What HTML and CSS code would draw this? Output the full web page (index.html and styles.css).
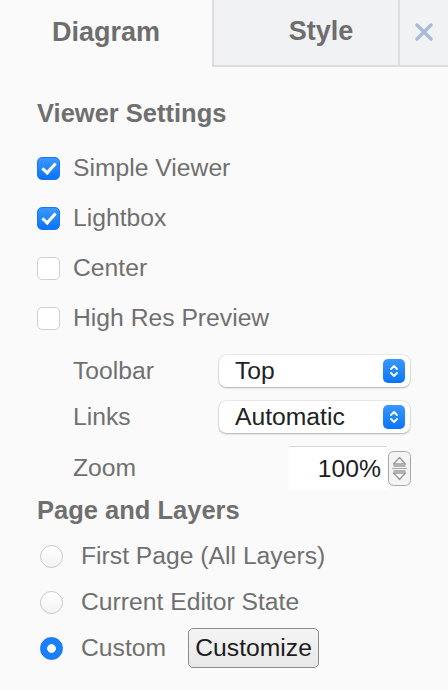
FILE: index.html
```html
<!DOCTYPE html>
<html lang="en">
  <head>
    <meta charset="UTF-8">
    <meta name="viewport" content="width=device-width, initial-scale=1.0">
    <title>Format Panel</title>
    <link rel="stylesheet" href="styles.css">
  </head>
  <body>
    <div class="tabs">
      <div class="tab active">Diagram</div>
      <div class="tab style">Style</div>
      <div class="tab close">
        <svg width="18" height="18" viewBox="0 0 18 18">
          <path d="M2 2 L16 16 M16 2 L2 16" stroke="#a8bcd2" stroke-width="3.4" stroke-linecap="round"/>
        </svg>
      </div>
    </div>

    <div class="panel">
      <div class="section-title">Viewer Settings</div>

      <label class="check-row">
        <span class="box checked"></span>
        <span>Simple Viewer</span>
      </label>
      <label class="check-row">
        <span class="box checked"></span>
        <span>Lightbox</span>
      </label>
      <label class="check-row">
        <span class="box"></span>
        <span>Center</span>
      </label>
      <label class="check-row">
        <span class="box"></span>
        <span>High Res Preview</span>
      </label>

      <div class="option-row first">
        <span class="option-label">Toolbar</span>
        <div class="select">
          <span>Top</span>
          <span class="select-arrows">
            <svg width="12" height="16" viewBox="0 0 12 16">
              <path d="M3 6 L6 3 L9 6 M3 10 L6 13 L9 10" fill="none" stroke="#fff" stroke-width="1.8" stroke-linecap="round" stroke-linejoin="round"/>
            </svg>
          </span>
        </div>
      </div>
      <div class="option-row">
        <span class="option-label">Links</span>
        <div class="select">
          <span>Automatic</span>
          <span class="select-arrows">
            <svg width="12" height="16" viewBox="0 0 12 16">
              <path d="M3 6 L6 3 L9 6 M3 10 L6 13 L9 10" fill="none" stroke="#fff" stroke-width="1.8" stroke-linecap="round" stroke-linejoin="round"/>
            </svg>
          </span>
        </div>
      </div>
      <div class="option-row zoom-row">
        <span class="option-label">Zoom</span>
        <div class="zoom-input">100%</div>
        <div class="spinner">
          <svg width="23" height="35" viewBox="0 0 23 35">
            <rect x="0.5" y="0.5" width="22" height="34" rx="5" fill="#f4f4f4" stroke="#a9a9a9"/>
            <line x1="4" y1="17.5" x2="19" y2="17.5" stroke="#a9a9a9"/>
            <path d="M5.5 13 L11.5 6.5 L17.5 13 Z M5.5 15 L17.5 15" fill="none" stroke="#9a9a9a" stroke-width="1.3" stroke-linejoin="round"/>
            <path d="M5.5 22 L11.5 28.5 L17.5 22 Z M5.5 20 L17.5 20" fill="none" stroke="#9a9a9a" stroke-width="1.3" stroke-linejoin="round"/>
          </svg>
        </div>
      </div>

      <div class="section-title">Page and Layers</div>

      <label class="radio-row">
        <span class="radio"></span>
        <span>First Page (All Layers)</span>
      </label>
      <label class="radio-row">
        <span class="radio"></span>
        <span>Current Editor State</span>
      </label>
      <label class="radio-row">
        <span class="radio selected"></span>
        <span>Custom</span>
        <button class="customize">Customize</button>
      </label>
    </div>
  </body>
</html>
```

FILE: styles.css
```css
body {
  margin: 0;
  font-family: "Liberation Sans", Arial, sans-serif;
  font-size: 24.7px;
  color: #707070;
  background-color: #fafafa;
}

.tabs {
  display: flex;
  height: 67px;
}

.tab {
  display: flex;
  align-items: center;
  justify-content: center;
  flex: 1;
  font-size: 27px;
  font-weight: bold;
  color: #6e6e6e;
  background-color: #f1f2f4;
  border-left: 2px solid #dcdde0;
  border-bottom: 2px solid #dcdde0;
  padding-bottom: 2px;
}

.tab.active {
  flex: none;
  width: 212px;
  background-color: transparent;
  border: none;
}

.tab.style {
  padding-left: 30px;
}

.tab.close {
  flex: none;
  width: 48px;
}

.panel {
  padding-left: 37px;
}

.section-title {
  height: 30px;
  line-height: 30px;
  font-size: 25.5px;
  font-weight: bold;
  color: #6f6f6f;
  margin-top: 31px;
  margin-bottom: 15px;
}

.check-row {
  display: flex;
  align-items: center;
  height: 50px;
  gap: 13px;
}

.box {
  width: 21px;
  height: 21px;
  border: 1px solid #cfcfcf;
  border-radius: 5px;
  background-color: #fff;
  position: relative;
}

.box.checked {
  border-color: #1776f0;
  background: linear-gradient(#3b98fd, #0a73f7);
}

.box.checked::after {
  content: "";
  position: absolute;
  left: 7px;
  top: 2px;
  width: 5px;
  height: 11px;
  border: solid #fff;
  border-width: 0 3px 3px 0;
  transform: rotate(42deg);
}

.option-row {
  display: flex;
  align-items: center;
  height: 46px;
  padding-left: 36px;
}

.option-row.first {
  margin-top: 5px;
}

.option-label {
  width: 146px;
}

.select {
  display: flex;
  align-items: center;
  justify-content: space-between;
  box-sizing: border-box;
  width: 191px;
  height: 32px;
  padding: 0 5px 0 16px;
  background-color: #fff;
  border-radius: 7px;
  box-shadow: 0 0 0 0.5px rgba(0, 0, 0, 0.12), 0 1px 2px rgba(0, 0, 0, 0.25);
  color: #222;
}

.select-arrows {
  display: flex;
  align-items: center;
  justify-content: center;
  width: 22px;
  height: 24px;
  border-radius: 5px;
  background: linear-gradient(#3a98fd, #0b74f8);
}

.zoom-row {
  height: 50px;
  margin-top: 3px;
}

.zoom-input {
  box-sizing: border-box;
  width: 98px;
  height: 44px;
  line-height: 44px;
  margin-left: 70px;
  padding-right: 6px;
  text-align: right;
  background-color: #fff;
  border-top: 1px solid #d7d7d7;
  color: #1c1c1c;
}

.spinner {
  display: flex;
  margin-left: 1px;
}

.zoom-row + .section-title {
  margin-top: 2px;
  margin-bottom: 8px;
}

.radio-row {
  display: flex;
  align-items: center;
  height: 46px;
  padding-left: 3px;
  gap: 18px;
}

.radio {
  width: 21px;
  height: 21px;
  border: 1px solid #c8c8c8;
  border-radius: 50%;
  background: linear-gradient(#fff, #f3f3f3);
}

.radio.selected {
  border-color: #1776f0;
  background: radial-gradient(circle, #fff 0 4px, #1a7ffa 4.6px);
}

.customize {
  margin-left: 4px;
  height: 40px;
  width: 131px;
  padding: 0;
  font-family: "Liberation Sans", Arial, sans-serif;
  font-size: 24.7px;
  color: #1c1c1c;
  background: linear-gradient(#f4f4f4, #e8e8e8);
  border: 1px solid #8c8c8c;
  border-radius: 5px;
}
```
